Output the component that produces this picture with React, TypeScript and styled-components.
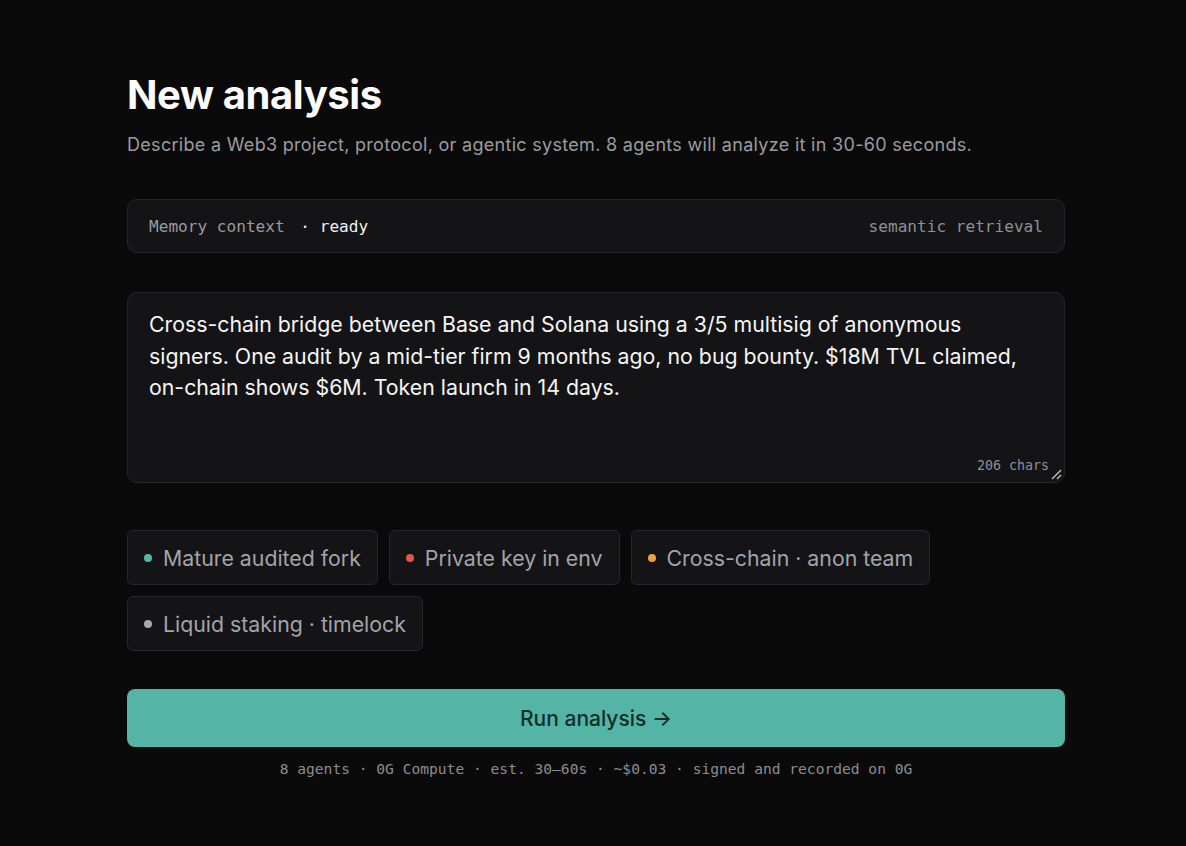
import styled, { createGlobalStyle } from 'styled-components';

const GlobalStyle = createGlobalStyle`
  html, body {
    margin: 0;
    padding: 0;
    background: #0a0a0a;
  }
  body {
    font-family: Inter, "Noto Sans", sans-serif;
    color: #f5f5f5;
  }
`;

const MONO = `"DejaVu Sans Mono", "Liberation Mono", monospace`;

type Tone = 'good' | 'bad' | 'warn' | 'neutral';

const presets: { label: string; tone: Tone }[] = [
  { label: 'Mature audited fork', tone: 'good' },
  { label: 'Private key in env', tone: 'bad' },
  { label: 'Cross-chain · anon team', tone: 'warn' },
  { label: 'Liquid staking · timelock', tone: 'neutral' },
];

const toneColors: Record<Tone, string> = {
  good: '#4fb8a6',
  bad: '#e5534b',
  warn: '#eba23c',
  neutral: '#a6a6ab',
};

const description =
  'Cross-chain bridge between Base and Solana using a 3/5 multisig of anonymous signers. One audit by a mid-tier firm 9 months ago, no bug bounty. $18M TVL claimed, on-chain shows $6M. Token launch in 14 days.';

const App = () => {
  return (
    <Page>
      <GlobalStyle />
      <Main>
        <Title>New analysis</Title>
        <Subtitle>
          Describe a Web3 project, protocol, or agentic system. 8 agents will analyze it in 30-60
          seconds.
        </Subtitle>

        <MemoryBar>
          <MemoryLeft>
            Memory context <Ready>· ready</Ready>
          </MemoryLeft>
          <MemoryRight>semantic retrieval</MemoryRight>
        </MemoryBar>

        <InputBox>
          <InputText>{description}</InputText>
          <CharCount>{description.length} chars</CharCount>
          <Grip viewBox="0 0 12 12">
            <line x1="2" y1="11" x2="11" y2="2" />
            <line x1="7" y1="11" x2="11" y2="7" />
          </Grip>
        </InputBox>

        <Chips>
          {presets.map((p) => (
            <Chip key={p.label}>
              <Dot tone={p.tone} />
              {p.label}
            </Chip>
          ))}
        </Chips>

        <RunButton>Run analysis →</RunButton>
        <Footnote>
          8 agents · 0G Compute · est. 30–60s · ~$0.03 · signed and recorded on 0G
        </Footnote>
      </Main>
    </Page>
  );
};

export default App;

const Page = styled.div`
  min-height: 846px;
  background: #0a0a0a;
  padding: 71px 121px 0 127px;
  box-sizing: border-box;
`;

const Main = styled.main`
  width: 938px;
  display: flex;
  flex-direction: column;
`;

const Title = styled.h1`
  margin: 0;
  font-size: 40px;
  font-weight: 700;
  line-height: 48px;
  letter-spacing: -0.4px;
  color: #fafafa;
`;

const Subtitle = styled.p`
  margin: 14px 0 0;
  font-size: 18px;
  line-height: 24px;
  letter-spacing: 0.3px;
  color: #9b9ba1;
`;

const MemoryBar = styled.div`
  margin-top: 42px;
  height: 54px;
  box-sizing: border-box;
  padding: 0 21px;
  display: flex;
  align-items: center;
  justify-content: space-between;
  background: #141416;
  border: 1px solid #26262a;
  border-radius: 10px;
  font-family: ${MONO};
  font-size: 16.1px;
`;

const MemoryLeft = styled.span`
  color: #9a9aa0;
  white-space: pre;
`;

const Ready = styled.span`
  margin-left: 6px;
  color: #f2f2f2;
`;

const MemoryRight = styled.span`
  color: #8f8f95;
`;

const InputBox = styled.div`
  position: relative;
  margin-top: 39px;
  height: 191px;
  box-sizing: border-box;
  padding: 16px 34px 16px 21px;
  background: #141416;
  border: 1px solid #26262a;
  border-radius: 10px;
`;

const InputText = styled.p`
  margin: 0;
  font-size: 21.3px;
  line-height: 31.5px;
  color: #f5f5f5;
`;

const CharCount = styled.span`
  position: absolute;
  right: 15px;
  bottom: 9px;
  font-family: ${MONO};
  font-size: 13.3px;
  color: #8e8e94;
`;

const Grip = styled.svg`
  position: absolute;
  right: 2px;
  bottom: 2px;
  width: 12px;
  height: 12px;
  stroke: #bdbdc2;
  stroke-width: 1.4;
`;

const Chips = styled.div`
  margin-top: 47px;
  display: flex;
  flex-wrap: wrap;
  gap: 11px 11px;
`;

const Chip = styled.button`
  height: 55px;
  box-sizing: border-box;
  padding: 0 16px;
  display: flex;
  align-items: center;
  gap: 11px;
  background: #141416;
  border: 1px solid #27272b;
  border-radius: 6px;
  font-family: Inter, "Noto Sans", sans-serif;
  font-size: 21.3px;
  color: #a3a3a9;
`;

const Dot = styled.span<{ tone: Tone }>`
  width: 8px;
  height: 8px;
  border-radius: 50%;
  background: ${(p) => toneColors[p.tone]};
`;

const RunButton = styled.button`
  margin-top: 38px;
  height: 58px;
  border: none;
  border-radius: 8px;
  background: #54b5a7;
  font-family: Inter, "Noto Sans", sans-serif;
  font-size: 21px;
  font-weight: 500;
  color: #0f2f2a;
`;

const Footnote = styled.p`
  margin: 13px 0 0;
  text-align: center;
  font-family: ${MONO};
  font-size: 14.6px;
  color: #8c8c92;
`;
